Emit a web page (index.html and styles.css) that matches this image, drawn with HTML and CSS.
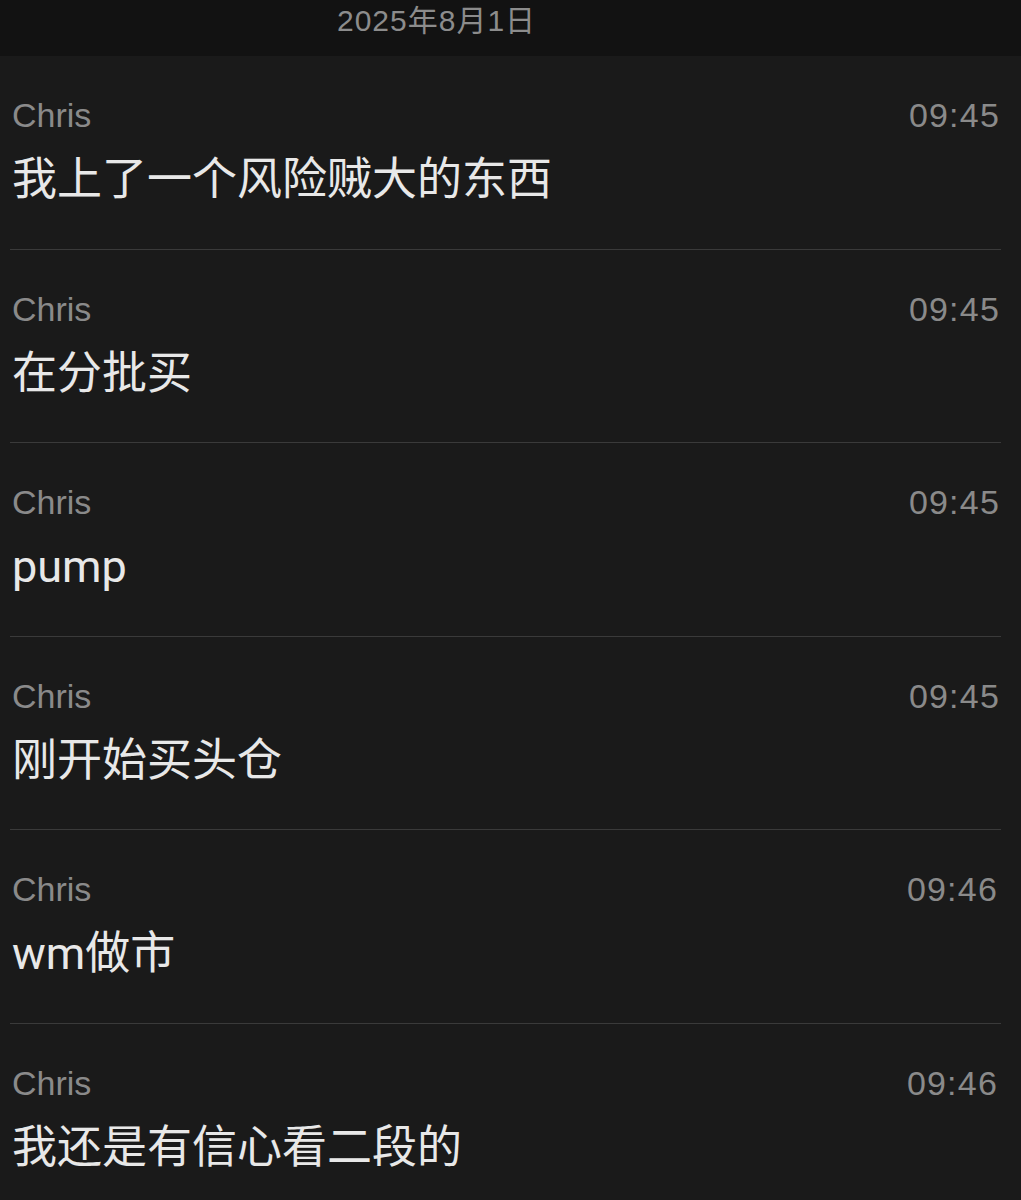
FILE: index.html
```html
<!DOCTYPE html>
<html lang="zh-CN">
<head>
    <meta charset="UTF-8">
    <meta name="viewport" content="width=device-width, initial-scale=1.0">
    <title>聊天记录</title>
    <link rel="stylesheet" href="styles.css">
</head>
<body>
    <div class="date-bar">
        <span class="date">2025年8月1日</span>
    </div>

    <ul class="messages">
        <li class="message">
            <div class="meta"><span class="sender">Chris</span><span class="time">09:45</span></div>
            <div class="text">我上了一个风险贼大的东西</div>
        </li>
        <li class="message">
            <div class="meta"><span class="sender">Chris</span><span class="time">09:45</span></div>
            <div class="text">在分批买</div>
        </li>
        <li class="message">
            <div class="meta"><span class="sender">Chris</span><span class="time">09:45</span></div>
            <div class="text">pump</div>
        </li>
        <li class="message">
            <div class="meta"><span class="sender">Chris</span><span class="time">09:45</span></div>
            <div class="text">刚开始买头仓</div>
        </li>
        <li class="message">
            <div class="meta"><span class="sender">Chris</span><span class="time late">09:46</span></div>
            <div class="text">wm做市</div>
        </li>
        <li class="message">
            <div class="meta"><span class="sender">Chris</span><span class="time late">09:46</span></div>
            <div class="text">我还是有信心看二段的</div>
        </li>
    </ul>
</body>
</html>
```

FILE: styles.css
```css
body {
    margin: 0;
    background-color: #1a1a1a;
    font-family: 'Liberation Sans', 'Noto Sans CJK SC', sans-serif;
    color: #e8e8e8;
    overflow: hidden;
}
.date-bar {
    height: 56px;
    box-sizing: border-box;
    padding: 6px 0 0 337px;
    background-color: #121212;
}
.date {
    font-size: 30px;
    line-height: 30px;
    letter-spacing: 1px;
    color: #8c8c8c;
}
.messages {
    list-style: none;
    margin: 0 20px 0 10px;
    padding: 0;
}
.message {
    height: 193.5px;
    box-sizing: border-box;
    padding: 39px 1px 0 2px;
    border-bottom: 1px solid #3a3a3a;
}
.meta {
    display: flex;
    justify-content: space-between;
    font-size: 34px;
    line-height: 40px;
    color: #8a8a8a;
}
.time {
    letter-spacing: 1.2px;
}
.time.late {
    margin-right: 2px;
}
.text {
    margin-top: 17px;
    font-family: Roboto, 'Noto Sans CJK SC', sans-serif;
    font-size: 45px;
    line-height: 56px;
    color: #e8e8e8;
}
```
